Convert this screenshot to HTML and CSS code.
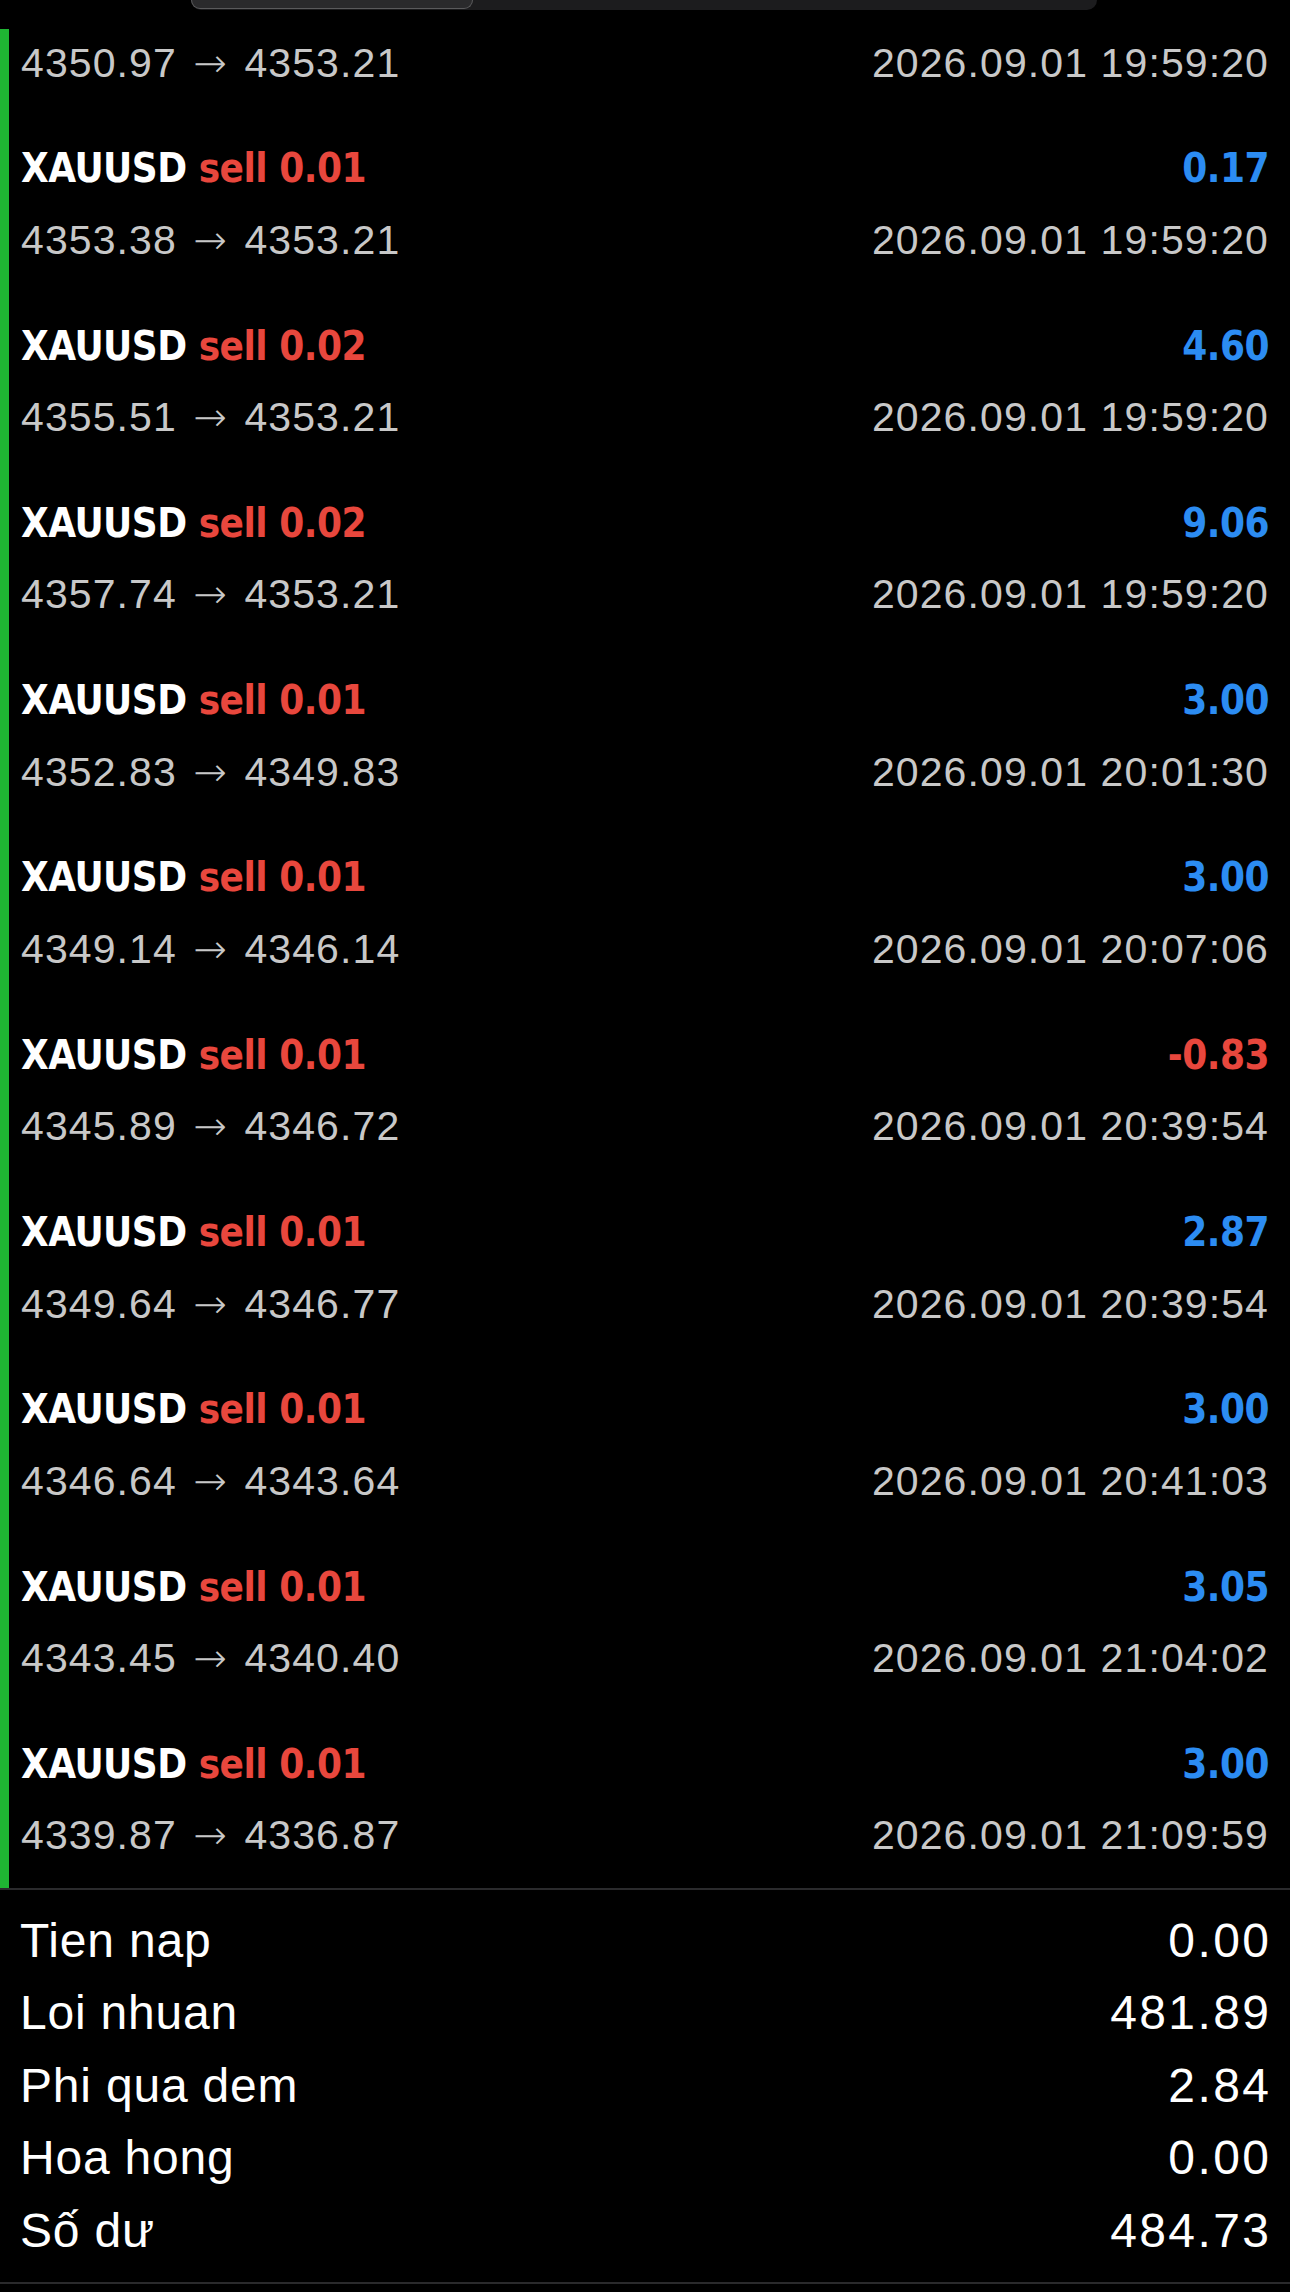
FILE: index.html
```html
<!DOCTYPE html>
<html lang="vi">
<head>
<meta charset="utf-8">
<title>History</title>
<link rel="stylesheet" href="styles.css">
</head>
<body>
<div class="header">
  <div class="seg"><div class="seg-on"></div></div>
</div>
<div class="list">
  <div class="deal">
    <div class="line1"></div>
    <div class="line2"><span>4350.97 <span class="arr">→</span> 4353.21</span><span>2026.09.01 19:59:20</span></div>
  </div>
  <div class="deal">
    <div class="line1"><span class="title"><span class="sym">XAUUSD</span> <span class="side">sell 0.01</span></span><span class="pl pos">0.17</span></div>
    <div class="line2"><span>4353.38 <span class="arr">→</span> 4353.21</span><span>2026.09.01 19:59:20</span></div>
  </div>
  <div class="deal">
    <div class="line1"><span class="title"><span class="sym">XAUUSD</span> <span class="side">sell 0.02</span></span><span class="pl pos">4.60</span></div>
    <div class="line2"><span>4355.51 <span class="arr">→</span> 4353.21</span><span>2026.09.01 19:59:20</span></div>
  </div>
  <div class="deal">
    <div class="line1"><span class="title"><span class="sym">XAUUSD</span> <span class="side">sell 0.02</span></span><span class="pl pos">9.06</span></div>
    <div class="line2"><span>4357.74 <span class="arr">→</span> 4353.21</span><span>2026.09.01 19:59:20</span></div>
  </div>
  <div class="deal">
    <div class="line1"><span class="title"><span class="sym">XAUUSD</span> <span class="side">sell 0.01</span></span><span class="pl pos">3.00</span></div>
    <div class="line2"><span>4352.83 <span class="arr">→</span> 4349.83</span><span>2026.09.01 20:01:30</span></div>
  </div>
  <div class="deal">
    <div class="line1"><span class="title"><span class="sym">XAUUSD</span> <span class="side">sell 0.01</span></span><span class="pl pos">3.00</span></div>
    <div class="line2"><span>4349.14 <span class="arr">→</span> 4346.14</span><span>2026.09.01 20:07:06</span></div>
  </div>
  <div class="deal">
    <div class="line1"><span class="title"><span class="sym">XAUUSD</span> <span class="side">sell 0.01</span></span><span class="pl neg">-0.83</span></div>
    <div class="line2"><span>4345.89 <span class="arr">→</span> 4346.72</span><span>2026.09.01 20:39:54</span></div>
  </div>
  <div class="deal">
    <div class="line1"><span class="title"><span class="sym">XAUUSD</span> <span class="side">sell 0.01</span></span><span class="pl pos">2.87</span></div>
    <div class="line2"><span>4349.64 <span class="arr">→</span> 4346.77</span><span>2026.09.01 20:39:54</span></div>
  </div>
  <div class="deal">
    <div class="line1"><span class="title"><span class="sym">XAUUSD</span> <span class="side">sell 0.01</span></span><span class="pl pos">3.00</span></div>
    <div class="line2"><span>4346.64 <span class="arr">→</span> 4343.64</span><span>2026.09.01 20:41:03</span></div>
  </div>
  <div class="deal">
    <div class="line1"><span class="title"><span class="sym">XAUUSD</span> <span class="side">sell 0.01</span></span><span class="pl pos">3.05</span></div>
    <div class="line2"><span>4343.45 <span class="arr">→</span> 4340.40</span><span>2026.09.01 21:04:02</span></div>
  </div>
  <div class="deal">
    <div class="line1"><span class="title"><span class="sym">XAUUSD</span> <span class="side">sell 0.01</span></span><span class="pl pos">3.00</span></div>
    <div class="line2"><span>4339.87 <span class="arr">→</span> 4336.87</span><span>2026.09.01 21:09:59</span></div>
  </div>
</div>
<div class="summary">
  <div class="srow"><span class="slabel">Tien nap</span><span class="sval">0.00</span></div>
  <div class="srow"><span class="slabel">Loi nhuan</span><span class="sval">481.89</span></div>
  <div class="srow"><span class="slabel">Phi qua dem</span><span class="sval">2.84</span></div>
  <div class="srow"><span class="slabel">Hoa hong</span><span class="sval">0.00</span></div>
  <div class="srow"><span class="slabel">Số dư</span><span class="sval">484.73</span></div>
</div>
</body>
</html>
```
FILE: styles.css
```css
html, body {
  margin: 0;
  padding: 0;
  background: #000;
}
body {
  overflow: hidden;
  font-family: "Liberation Sans", Arial, sans-serif;
  color: #fff;
  position: relative;
}
.header {
  position: absolute;
  top: 0;
  left: 0;
  right: 0;
  height: 29px;
  background: #000;
  z-index: 2;
  display: flex;
}
.seg {
  margin-left: 191px;
  width: 906px;
  height: 10px;
  background: #1c1c1e;
  border-radius: 0 0 16px 16px;
  display: flex;
}
.seg-on {
  width: 280px;
  height: 8px;
  background: #2a2a2c;
  border: 1px solid #5a5a5c;
  border-top: none;
  border-radius: 0 0 14px 14px;
}
.list {
  margin-top: -62.3px;
  border-left: 9px solid #1fb533;
}
.deal {
  height: 177.3px;
  box-sizing: border-box;
  padding: 23.3px 21px 0 12px;
  display: flex;
  flex-direction: column;
}
.line1 {
  height: 60px;
  display: flex;
  justify-content: space-between;
  align-items: center;
  font-family: "DejaVu Sans Condensed", "DejaVu Sans", sans-serif;
  font-stretch: condensed;
  font-weight: bold;
  font-size: 40px;
  letter-spacing: -0.5px;
}
.sym { color: #fff; }
.side { color: #e8473d; }
.pos { color: #2c8cf2; }
.neg { color: #e8473d; }
.line2 {
  height: 60px;
  margin-top: 12px;
  display: flex;
  justify-content: space-between;
  align-items: center;
  font-size: 41px;
  letter-spacing: 1.1px;
  color: #c8c8c8;
}
.arr {
  font-family: "DejaVu Sans", sans-serif;
  font-weight: 200;
  font-size: 40px;
  letter-spacing: 0;
  margin: 0 5px 0 4px;
}
.summary {
  border-top: 2px solid #2a2a2c;
  border-bottom: 2px solid #2a2a2c;
  padding: 14px 21px 16px 20px;
}
.srow {
  height: 72.5px;
  display: flex;
  justify-content: space-between;
  align-items: center;
  font-size: 48px;
  color: #fff;
}
.slabel {
  letter-spacing: 0.8px;
}
.sval {
  letter-spacing: 2.4px;
  margin-right: -2.4px;
}
```
